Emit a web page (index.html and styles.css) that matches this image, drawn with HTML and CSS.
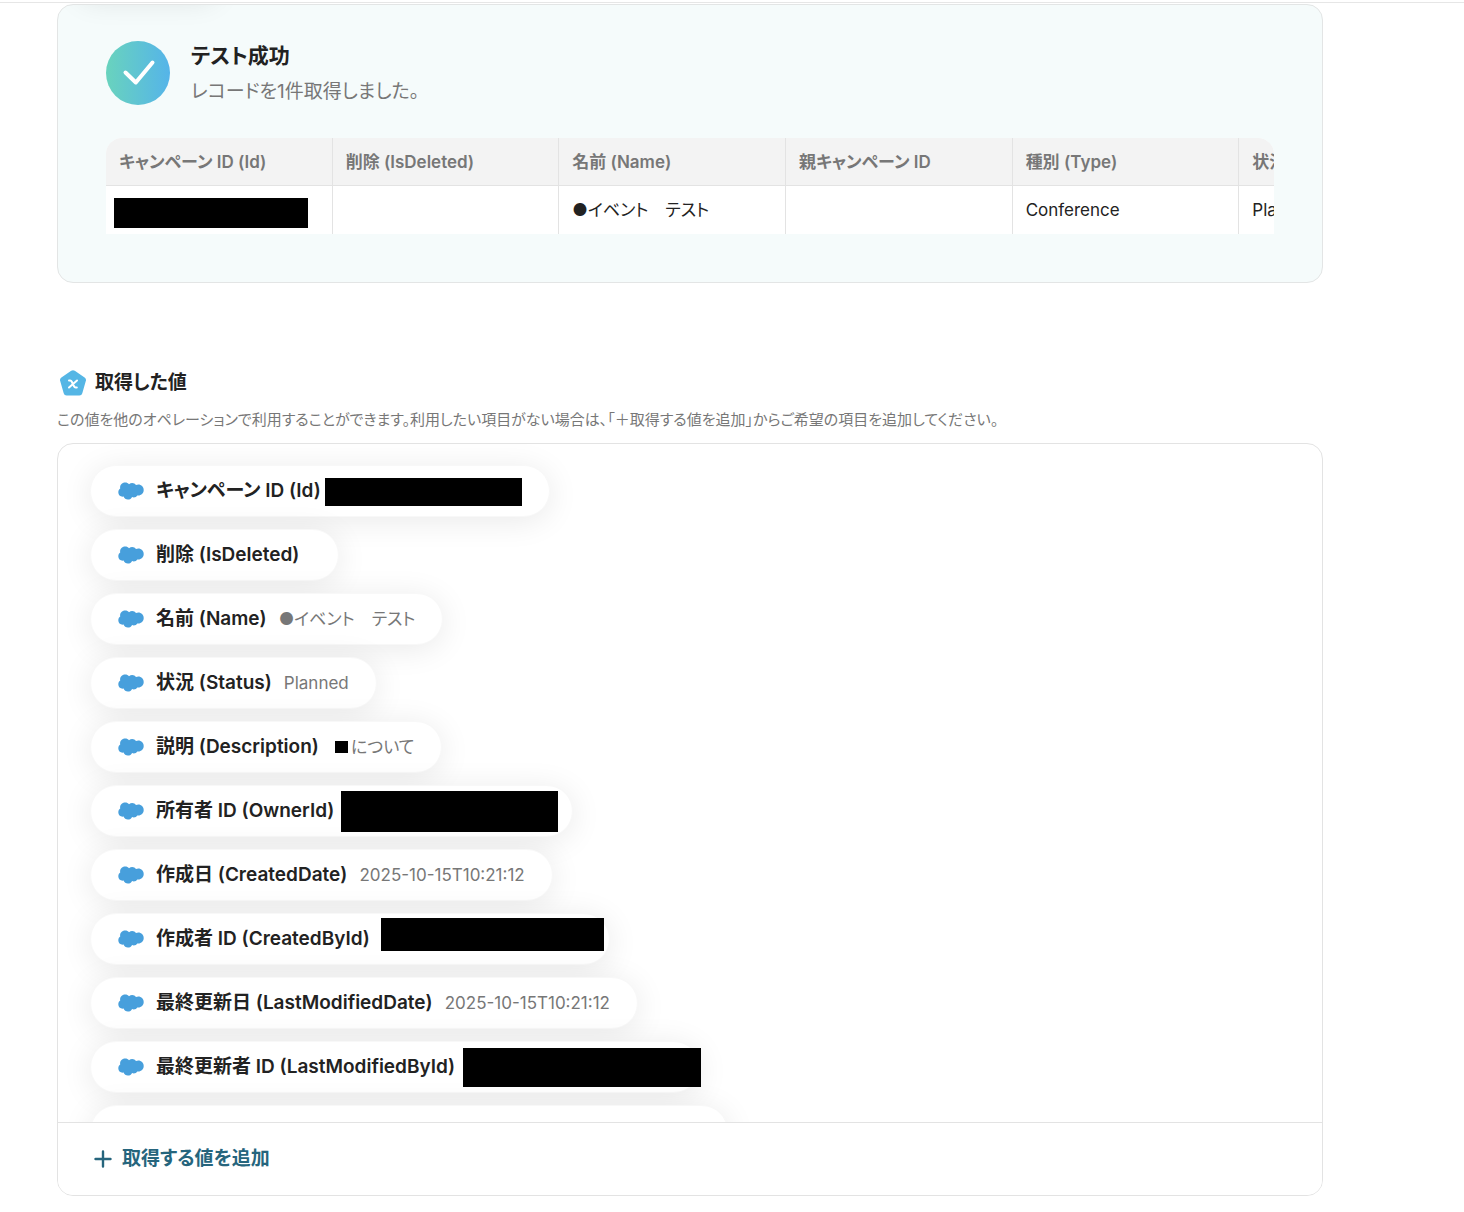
FILE: index.html
```html
<!DOCTYPE html>
<html lang="ja">
<head>
<meta charset="utf-8">
<meta name="viewport" content="width=device-width, initial-scale=1">
<title>テスト成功</title>
<link rel="stylesheet" href="styles.css">
</head>
<body>
<svg class="defs" aria-hidden="true">
  <symbol id="cloud" viewBox="0 0 26 18">
    <path d="M2.200 6.500C1.600 3 4 .5 7.200.5c1.600 0 2.900.6 3.800 1.700C12 1.400 13 1 14.200 1c1.600 0 3 .8 3.800 2 .7-.3 1.500-.5 2.300-.5 3 0 5.400 2.400 5.400 5.500s-2.400 5.500-5.400 5.500c-.4 0-.7 0-1-.1-.7 1.200-2 2-3.500 2-.6 0-1.200-.1-1.700-.4-.7 1.600-2.300 2.600-4.200 2.600-2 0-3.700-1.200-4.300-3C2.400 15 .3 13.200.3 10.300c0-1.600.7-3 1.900-3.800Z"/>
  </symbol>
</svg>
<header class="topbar"></header>
<main class="page">
  <section class="result">
    <div class="result-head">
      <svg class="result-icon" viewBox="0 0 64 64" aria-hidden="true">
        <defs><linearGradient id="ok"><stop offset="0" stop-color="#69d3bd"/><stop offset="1" stop-color="#55b4e9"/></linearGradient></defs>
        <circle cx="32" cy="32" r="32" fill="url(#ok)"/>
        <path d="M19.500 31.500 29.800 41.500 46.500 21.500" fill="none" stroke="#fff" stroke-width="4" stroke-linecap="round" stroke-linejoin="round"/>
      </svg>
      <div>
        <h2 class="result-title">テスト成功</h2>
        <p class="result-text">レコードを1件取得しました。</p>
      </div>
    </div>
    <div class="table-scroll">
      <table class="records">
        <thead><tr><th>キャンペーン ID (Id)</th><th>削除 (IsDeleted)</th><th>名前 (Name)</th><th>親キャンペーン ID</th><th>種別 (Type)</th><th>状況 (Status)</th></tr></thead>
        <tbody><tr><td class="masked"><span class="mask mask-cell"></span></td><td></td><td>●イベント　テスト</td><td></td><td>Conference</td><td>Planned</td></tr></tbody>
      </table>
    </div>
  </section>

  <section class="values">
    <div class="values-head">
      <svg class="values-icon" viewBox="0 0 26 26" aria-hidden="true">
        <path d="M11.200.8a3 3 0 0 1 3.600 0l9.800 6.800a3 3 0 0 1 1.200 3.500L22.300 23.300a3 3 0 0 1-2.900 2.200H6.600a3 3 0 0 1-2.900-2.200L.2 11.100a3 3 0 0 1 1.200-3.500Z" fill="#55b6e5"/>
        <path d="M9 10.500h1.200c.8 0 1.200.4 1.600 1.200l2.200 4.600c.4.8.8 1.200 1.600 1.200h1.200M17 10.500 13 14l-4 3.500" fill="none" stroke="#fff" stroke-width="2" stroke-linecap="round"/>
      </svg>
      <h2 class="values-title">取得した値</h2>
    </div>
    <p class="values-text">この値を他のオペレーションで利用することができます。利用したい項目がない場合は、「＋取得する値を追加」からご希望の項目を追加してください。</p>
    <div class="panel">
      <ul class="chips">
        <li class="chip chip-id"><svg class="cloud"><use href="#cloud"/></svg><span class="name">キャンペーン ID (Id)</span><span class="mask mask-id"></span></li>
        <li class="chip"><svg class="cloud"><use href="#cloud"/></svg><span class="name">削除 (IsDeleted)</span><span class="value"></span></li>
        <li class="chip"><svg class="cloud"><use href="#cloud"/></svg><span class="name">名前 (Name)</span><span class="value">●イベント　テスト</span></li>
        <li class="chip"><svg class="cloud"><use href="#cloud"/></svg><span class="name">状況 (Status)</span><span class="value">Planned</span></li>
        <li class="chip"><svg class="cloud"><use href="#cloud"/></svg><span class="name">説明 (Description)</span><span class="value value-desc"><span class="mask-char"></span>について</span></li>
        <li class="chip chip-owner"><svg class="cloud"><use href="#cloud"/></svg><span class="name">所有者 ID (OwnerId)</span><span class="mask mask-owner"></span></li>
        <li class="chip"><svg class="cloud"><use href="#cloud"/></svg><span class="name">作成日 (CreatedDate)</span><span class="value">2025-10-15T10:21:12</span></li>
        <li class="chip chip-creator"><svg class="cloud"><use href="#cloud"/></svg><span class="name">作成者 ID (CreatedById)</span><span class="mask mask-creator"></span></li>
        <li class="chip"><svg class="cloud"><use href="#cloud"/></svg><span class="name">最終更新日 (LastModifiedDate)</span><span class="value">2025-10-15T10:21:12</span></li>
        <li class="chip chip-editor"><svg class="cloud"><use href="#cloud"/></svg><span class="name">最終更新者 ID (LastModifiedById)</span><span class="mask mask-editor"></span></li>
        <li class="chip chip-next"><svg class="cloud"><use href="#cloud"/></svg></li>
      </ul>
      <div class="panel-foot">
        <button class="add" type="button"><svg class="plus" viewBox="0 0 18 18" aria-hidden="true"><path d="M9 1.500v15M1.500 9h15" stroke="currentColor" stroke-width="2.400" stroke-linecap="round"/></svg>取得する値を追加</button>
      </div>
    </div>
  </section>
</main>
</body>
</html>
```
FILE: styles.css
```css
* { box-sizing: border-box; }
body {
  margin: 0;
  background: #fff;
  color: #222;
  font-family: Inter, "Noto Sans CJK JP", sans-serif;
  font-size: 17px;
  line-height: 24px;
  font-feature-settings: "palt";
}
h2, p, ul { margin: 0; padding: 0; }
.defs { position: absolute; width: 0; height: 0; }
.topbar { height: 3px; border-bottom: 1px solid #e6e6e6; }
.page { margin: 1px 141px 16px 57px; }

.result {
  position: relative;
  overflow: hidden;
  padding: 36px 48px 48px;
  border: 1px solid #e3e5e5;
  border-radius: 16px;
  background: #f5fbfb;
}
/* shadow cast by the field scrolled under the top bar */
.result::before {
  content: "";
  position: absolute;
  top: -40px;
  left: 20px;
  width: 140px;
  height: 32px;
  border-radius: 16px;
  box-shadow: 0 4px 28px rgba(0, 0, 0, .1);
}
.result-head { display: flex; gap: 21px; height: 64px; margin-bottom: 33px; }
.result-icon { width: 64px; height: 64px; }
.result-title { font-size: 21px; line-height: 30px; font-weight: 600; }
.result-text { margin-top: 6px; color: #777; font-size: 19px; line-height: 30px; }

.table-scroll { overflow: hidden; border-radius: 16px 16px 0 0; }
.records { width: 1360px; table-layout: fixed; border-collapse: separate; border-spacing: 0; background: #fff; }
.records th, .records td { height: 48px; padding: 0 13px; border-right: 1px solid #e3e3e3; text-align: left; white-space: nowrap; }
.records th { background: #f3f3f3; border-bottom: 1px solid #e3e3e3; color: #777; font-weight: 600; }
.masked { position: relative; }

.mask { position: absolute; background: #000; }
.mask-cell { top: 12px; left: 8px; width: 194px; height: 30px; }

.values { margin-top: 84px; }
.values-head { display: flex; align-items: center; gap: 9px; height: 32px; padding-left: 3px; }
.values-icon { width: 26px; height: 26px; }
.values-title { font-size: 19px; line-height: 28px; font-weight: 600; }
.values-text { margin: 9px 0 11px; color: #777; font-size: 15px; line-height: 24px; }

.panel { border: 1px solid #e3e3e3; border-radius: 16px; overflow: hidden; }
.chips {
  display: flex;
  flex-direction: column;
  align-items: flex-start;
  gap: 12px;
  height: 678px;
  padding: 21px 32px;
  overflow: hidden;
  list-style: none;
}
.chip {
  position: relative;
  display: flex;
  flex-shrink: 0;
  align-items: center;
  gap: 12px;
  height: 52px;
  padding: 0 27px;
  border: 1px solid #f8f8f8;
  border-radius: 26px;
  background: #fff;
  box-shadow: 0 4px 32px rgba(0, 0, 0, .09);
  white-space: nowrap;
}
.chip-id { width: 460px; }
.chip-owner { width: 483px; }
.chip-creator { width: 520px; }
.chip-editor { width: 610px; }
.chip-next { width: 638px; }
.cloud { width: 26px; height: 18px; fill: #479fdc; }
.name { font-size: 19px; font-weight: 600; }
.value { color: #777; }
.value-desc { display: flex; align-items: center; gap: 3px; padding-left: 4px; }
.mask-char { width: 13px; height: 12px; background: #000; }

.mask-id { top: 12px; right: 27px; width: 197px; height: 28px; }
.mask-owner { top: 5px; right: 14px; width: 217px; height: 41px; }
.mask-creator { top: 4px; right: 5px; width: 223px; height: 33px; }
.mask-editor { top: 6px; right: -2px; width: 238px; height: 39px; }

.panel-foot { padding: 20px 36px; border-top: 1px solid #e3e3e3; background: #fff; }
.add {
  display: flex;
  align-items: center;
  gap: 10px;
  height: 32px;
  padding: 0;
  border: 0;
  background: none;
  color: #26657d;
  font: inherit;
  font-size: 19px;
  font-weight: 600;
  cursor: pointer;
}
.plus { width: 18px; height: 18px; }
```
